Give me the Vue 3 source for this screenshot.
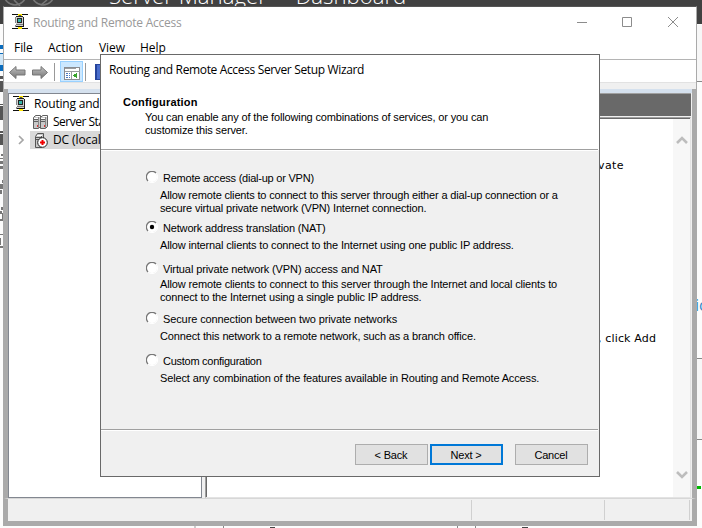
<script setup>
const options = [
  { title: 'Remote access (dial-up or VPN)', lines: ['Allow remote clients to connect to this server through either a dial-up connection or a', 'secure virtual private network (VPN) Internet connection.'], cls: 'o1' },
  { title: 'Network address translation (NAT)', lines: ['Allow internal clients to connect to the Internet using one public IP address.'], cls: 'o2', checked: true },
  { title: 'Virtual private network (VPN) access and NAT', lines: ['Allow remote clients to connect to this server through the Internet and local clients to', 'connect to the Internet using a single public IP address.'], cls: 'o3' },
  { title: 'Secure connection between two private networks', lines: ['Connect this network to a remote network, such as a branch office.'], cls: 'o4' },
  { title: 'Custom configuration', lines: ['Select any combination of the features available in Routing and Remote Access.'], cls: 'o5' },
]
</script>

<template>
  <div class="desktop">
    <div class="dash-head">
      <svg class="nav-circles" width="60" height="10" viewBox="0 0 60 10" fill="none" stroke="#777" stroke-width="1.6"><circle cx="15" cy="-6" r="11" /><circle cx="43" cy="-6" r="11" /><path d="M14 0L20 6M47 0L41 5" /></svg>
      <span class="dash-title">Server Manager <i>·</i> Dashboard</span>
    </div>
    <svg class="behind" width="702" height="528" viewBox="0 0 702 528" shape-rendering="crispEdges">
      <path fill="#fcfcfc" d="M0 24h4v504H0zM696 24h6v504h-6zM0 525h702v3H0z" />
      <path fill="#0a6cbd" d="M0 45h4v4H0zM0 65h4v6H0z" /><path fill="#cfe6f7" d="M0 53h4v12H0z" /><path fill="#0a6cbd" d="M0 53h4v1H0z" />
      <path fill="#555" d="M0 76h4v3H0zM0 81h4v11H0zM0 104h4v1H0zM0 106h4v14H0zM0 131h4v2H0zM0 134h4v11H0z" />
      <path fill="#777" d="M1 154h2v2H1zM0 158h3v1H0zM0 161h4v3H0zM0 166h4v3H0zM2 180h2v3H2zM0 184h4v5H0zM0 190h2v4H0zM1 207h2v3H1zM0 211h2v3H0zM2 213h1v6H2zM0 219h3v2H0zM0 234h3v1H0zM0 238h1v7H0zM3 240h1v5H3zM0 246h4v2H0z" />
      <path fill="#888" d="M696 81h6v1h-6zM696 358h6v1h-6zM696 439h6v1h-6z" />
      <path fill="#f7f7f7" d="M696 25h6v56h-6zM696 359h6v80h-6z" />
      <path fill="#00b900" d="M696 486h5v3h-5z" />
      <path fill="#888" d="M223 525h1v3h-1zM457 525h1v3h-1zM475 525h1v3h-1z" /><path fill="#ccc" d="M194 525h2v3h-2z" />
      <path fill="#444" d="M270 527h5v1h-5zM522 527h6v1h-6z" />
    </svg>
    <span class="peek">ic</span>

    <section class="console">
      <header class="titlebar">
        <svg class="app-icon" width="16" height="16" viewBox="0 0 16 16" shape-rendering="crispEdges"><use href="#router" /></svg>
        <span class="caption">Routing and Remote Access</span>
        <svg class="controls" width="104" height="14" viewBox="0 0 104 14" fill="none" stroke="#8c8c8c"><path d="M1 7.500h10M46.500 2.500h9v9h-9zM92 2l10 10M102 2l-10 10" /></svg>
      </header>
      <nav class="menu"><span class="m-file">File</span><span class="m-action">Action</span><span class="m-view">View</span><span>Help</span></nav>
      <div class="toolbar">
        <svg width="97" height="22" viewBox="0 0 97 22">
          <defs>
            <linearGradient id="ag" x2="0" y2="1"><stop stop-color="#c4c4c4" /><stop offset="1" stop-color="#737373" /></linearGradient>
            <g id="router"><path fill="#111" d="M0 0h16v1H0zM0 14h16v1H0zM4 12h8v1H4z" /><path fill="#ffe600" d="M6 0h4v2H6zM6 13h4v2H6z" /><path fill="#555" d="M7 1h2v1H7z" /><path fill="#d0d0d0" d="M4 3h7v9H4z" /><path fill="#222" d="M4 2h7v1H4zM11 3h1v9h-1zM5 4h5v5H5z" /><path fill="#888" d="M3 3h1v6H3zM3 11h1v2H3z" /><path fill="#35b5aa" d="M6 5h3v3H6z" /><path fill="#777" d="M4 10h7v1H4z" /></g>
          </defs>
          <g fill="url(#ag)" stroke="#777"><path d="M5.500 12.500l6.500-6v3.500h9v5h-9v3.500z" /><path d="M43.500 12.500l-6.500-6v3.500h-8.500v5h8.500v3.500z" /></g>
          <g shape-rendering="crispEdges">
            <path fill="#999" d="M50 3h1v18h-1zM81 3h1v18h-1z" />
            <path fill="#cce8ff" stroke="#99d1ff" d="M56.500 1.500h22v20h-22z" />
            <path fill="#fff" stroke="#8b8d91" d="M60.500 7.500h15v12h-15z" /><path fill="#9b9da0" d="M61 8h11v1H61zM61 11h15v1H61zM67 12h1v7h-1z" />
            <path fill="#4d7ac0" d="M62 13h2v1h-2zM62 15h2v1h-2zM62 17h2v1h-2zM65 13h1v1h-1zM65 15h1v1h-1zM65 17h1v1h-1z" />
            <path fill="#39a42d" d="M69 15.500l4-3v6z" />
            <path fill="#26449c" d="M91 4h6v16h-6z" /><path fill="#496dcc" d="M93 5h4v14h-4z" />
          </g>
        </svg>
      </div>
      <div class="band"></div>
      <main class="body">
        <aside class="tree">
          <div class="row root"><svg width="16" height="16" viewBox="0 0 16 16" shape-rendering="crispEdges"><use href="#router" /></svg><span>Routing and Remote Access</span></div>
          <div class="row status">
            <svg width="17" height="16" viewBox="0 0 17 16"><g stroke="#606060"><path fill="#c9c9c9" d="M1.500 3.500l2-2h5v11l-2 2h-5z" /><path fill="#c9c9c9" d="M8.500 3.500l2-2h5v11l-2 2h-5z" /><path d="M2 5.500h4M2 7.500h4M9 5.500h4M9 7.500h4" /></g><path stroke="#888" d="M6.500 3v11M13.500 3v11" /><path fill="#fff" d="M2 4h4v1H2zM9 4h4v1H9zM4 2h4v1H4zM11 2h4v1h-4z" /><path fill="#d33" d="M5 11h1v2H5zM12 11h1v2h-1z" /></svg>
            <span>Server Status</span>
          </div>
          <div class="row dc">
            <svg class="chev" width="7" height="10" viewBox="0 0 7 10" fill="none" stroke="#a6a6a6" stroke-width="1.700"><path d="M1 1l4 4-4 4" /></svg>
            <div class="picked"><svg width="15" height="17" viewBox="0 0 15 17"><path fill="#c9c9c9" stroke="#555" d="M1.500 4.500l2-3h6v12l-2 2h-6z" /><path stroke="#555" fill="none" d="M2 5.500h5M2 7.500h5M7.500 4v9" /><path fill="#fff" d="M3 3h5v1H3z" /><circle cx="8.500" cy="10.500" r="4.800" fill="#fff" stroke="#222" /><path fill="#e00" d="M7.500 8h2v1.500H11v2H9.500V13h-2v-1.500H6v-2h1.500z" /></svg><span>DC (local)</span></div>
          </div>
        </aside>
        <div class="right">
          <div class="dark"></div>
          <div class="details">
            <div class="copy"><p class="c1">vate</p><p class="c2">, click Add</p></div>
            <div class="scroll"><svg width="12" height="10" viewBox="0 0 12 10"><path d="M1 8l5-5 5 5" /></svg><svg width="12" height="10" viewBox="0 0 12 10"><path d="M1 2l5 5 5-5" /></svg></div>
          </div>
        </div>
      </main>
      <footer class="statusbar"><i></i><i></i><i></i></footer>
    </section>

    <section class="wizard">
      <header class="wiz-title">Routing and Remote Access Server Setup Wizard</header>
      <div class="wiz-head"><h1>Configuration</h1><p>You can enable any of the following combinations of services, or you can</p><p>customize this server.</p></div>
      <div class="choices">
        <div v-for="o in options" :key="o.cls" class="choice" :class="o.cls">
          <div class="pick">
            <svg width="12" height="12" viewBox="0 0 12 12"><circle cx="6" cy="6" r="5" fill="#fff" /><path d="M2 10A5.400 5.400 0 0 1 10 2" fill="none" stroke="#777" stroke-width="1.300" /><path d="M10 2A5.400 5.400 0 0 1 2 10" fill="none" stroke="#fff" /><circle v-if="o.checked" cx="6" cy="6" r="2.200" fill="#000" /></svg>
            <span>{{ o.title }}</span>
          </div>
          <p v-for="l in o.lines" :key="l">{{ l }}</p>
        </div>
      </div>
      <div class="actions"><button>&lt; Back</button><button class="next">Next &gt;</button><button class="cancel">Cancel</button></div>
    </section>
  </div>
</template>

<style>
body { margin: 0; overflow: hidden; }
</style>
<style scoped>
* { box-sizing: border-box; }
p, h1 { margin: 0; }
svg { display: block; flex: none; }
.desktop { position: relative; width: 702px; height: 528px; overflow: hidden; background: #fcfcfc; font: 12px/16px "Open Sans", "Noto Sans", sans-serif; color: #000; white-space: nowrap; }
.dash-head { position: relative; z-index: 1; height: 24px; background: #414141; color: #fff; overflow: hidden; }
.nav-circles { position: absolute; left: 0; top: 0; }
.dash-title { position: absolute; left: 109px; top: -18px; font: 300 22.2px/28px "Open Sans", sans-serif; }
.dash-title i { font-style: normal; margin: 0 6px; }
.behind { position: absolute; left: 0; top: 0; }
.peek { position: absolute; left: 695px; top: 295px; color: #3389c7; font-size: 16px; line-height: 20px; }
.console { position: absolute; z-index: 2; left: 3px; top: 6px; width: 694px; height: 520px; border: 1px solid #aaa; border-top-color: #555; background: #fff; display: flex; flex-direction: column; }
.titlebar { height: 32px; display: flex; align-items: center; padding: 0 16px 2px 8px; color: #999; flex: none; }
.titlebar .caption { margin-left: 5px; padding-top: 1px; letter-spacing: -.25px; }
.controls { margin-left: auto; }
.menu { height: 21px; display: flex; padding: 1px 0 0 10px; border-bottom: 1px solid #b4b4b4; flex: none; letter-spacing: -.05px; }
.m-file { width: 34px; } .m-action { width: 51px; } .m-view { width: 41px; }
.toolbar { height: 23px; border-bottom: 1px solid #e2e2e2; flex: none; }
.band { height: 6px; background: #f0f0f0; flex: none; }
.body { height: 409px; border: 0 solid #aaa; border-width: 0 4px; display: flex; padding-top: 4px; background: linear-gradient(#d5e1ee 4px, #f0f0f0 4px); flex: none; }
.tree { width: 194px; border: 1px solid #828790; background: #fff; padding-top: 1px; }
.row { height: 18px; display: flex; align-items: center; }
.root { padding-left: 4px; gap: 5px; letter-spacing: -.2px; }
.status { padding-left: 23px; gap: 4px; letter-spacing: -.5px; }
.dc { padding-left: 9px; }
.picked { display: flex; align-items: center; background: #d9d9d9; width: 163px; height: 18px; margin-left: 5px; padding-left: 4px; gap: 4px; letter-spacing: -.1px; }
.right { width: 486px; margin-left: 3px; display: flex; flex-direction: column; }
.dark { height: 23px; background: #696969; border-top: 1px solid #a0a0a0; }
.details { flex: 1; margin-top: 1px; border: 1px solid #a0a0a0; border-right-color: #e3e3e3; border-bottom-color: #e3e3e3; background: #fff; box-shadow: inset 1px 1px #696969; display: flex; justify-content: space-between; }
.copy { padding-left: 392px; font: 11px/16px "DejaVu Sans", sans-serif; padding-top: 40px; letter-spacing: .15px; }
.c1 { letter-spacing: .4px; }
.c2 { margin-top: 157px; }
.scroll { width: 17px; margin: 1px 0 0; background: #f7f7f7; display: flex; flex-direction: column; justify-content: space-between; align-items: center; padding: 16px 0 17px; }
.scroll path { fill: none; stroke: #bdbdbd; stroke-width: 2.600; }
.statusbar { flex: 1; border: 4px solid #aaa; border-top: 1px solid #d7d7d7; background: #f0f0f0; display: flex; padding: 1px 2px 1px 0; }
.statusbar i { border-right: 1px solid #d0d0d0; width: 133px; }
.statusbar i:first-child { width: 464px; } .statusbar i:last-child { width: 85px; }

.wizard { position: absolute; z-index: 3; left: 100px; top: 54px; width: 500px; height: 423px; border: 1px solid #696969; background: #f0f0f0; font: 11px/13px "Liberation Sans", sans-serif; letter-spacing: -.165px; display: flex; flex-direction: column; }
.wiz-title { height: 30px; padding-left: 8px; background: #fff; font: 12px/30px "Open Sans", sans-serif; letter-spacing: -.35px; flex: none; }
.wiz-head { height: 65px; background: #fff; border-bottom: 1px solid #a0a0a0; padding: 10px 0 0 44px; box-shadow: 0 1px #fff, 1px 0 #fff; flex: none; margin-right: 1px; letter-spacing: -.145px; }
.wiz-head h1 { font-size: 11px; line-height: 14px; margin: 0 0 2px -22px; letter-spacing: .2px; }
.choices { height: 280px; padding: 21px 0 0 45px; border-bottom: 1px solid #a0a0a0; box-shadow: 0 1px #fff; flex: none; margin-right: 1px; }
.pick { display: flex; gap: 5px; height: 14px; }
.pick span { padding-top: 1px; }
.choice p { padding-left: 14px; }
.o1 { height: 50px; } .o2 { height: 41px; } .o3 { height: 50px; } .o4 { height: 42px; }
.o1 .pick, .o2 .pick, .o4 .pick, .o5 .pick { margin-bottom: 4px; }
.o3 .pick { margin-bottom: 2px; }
.o1 .pick { letter-spacing: -.23px; }
.o3 .pick, .o4 .pick { letter-spacing: -.11px; }
.o5 .pick { letter-spacing: -.27px; }
.o2 p, .o3 p { letter-spacing: -.15px; }
.o4 p, .o5 p { letter-spacing: -.14px; }
.actions { display: flex; padding: 14px 0 0 254px; gap: 2px; }
button { width: 73px; height: 21px; padding: 1px 1px 0 0; background: #e1e1e1; border: 1px solid #adadad; font: inherit; letter-spacing: -.17px; color: #000; }
.next { border: 2px solid #0078d7; }
.cancel { margin-left: 10px; }
</style>
